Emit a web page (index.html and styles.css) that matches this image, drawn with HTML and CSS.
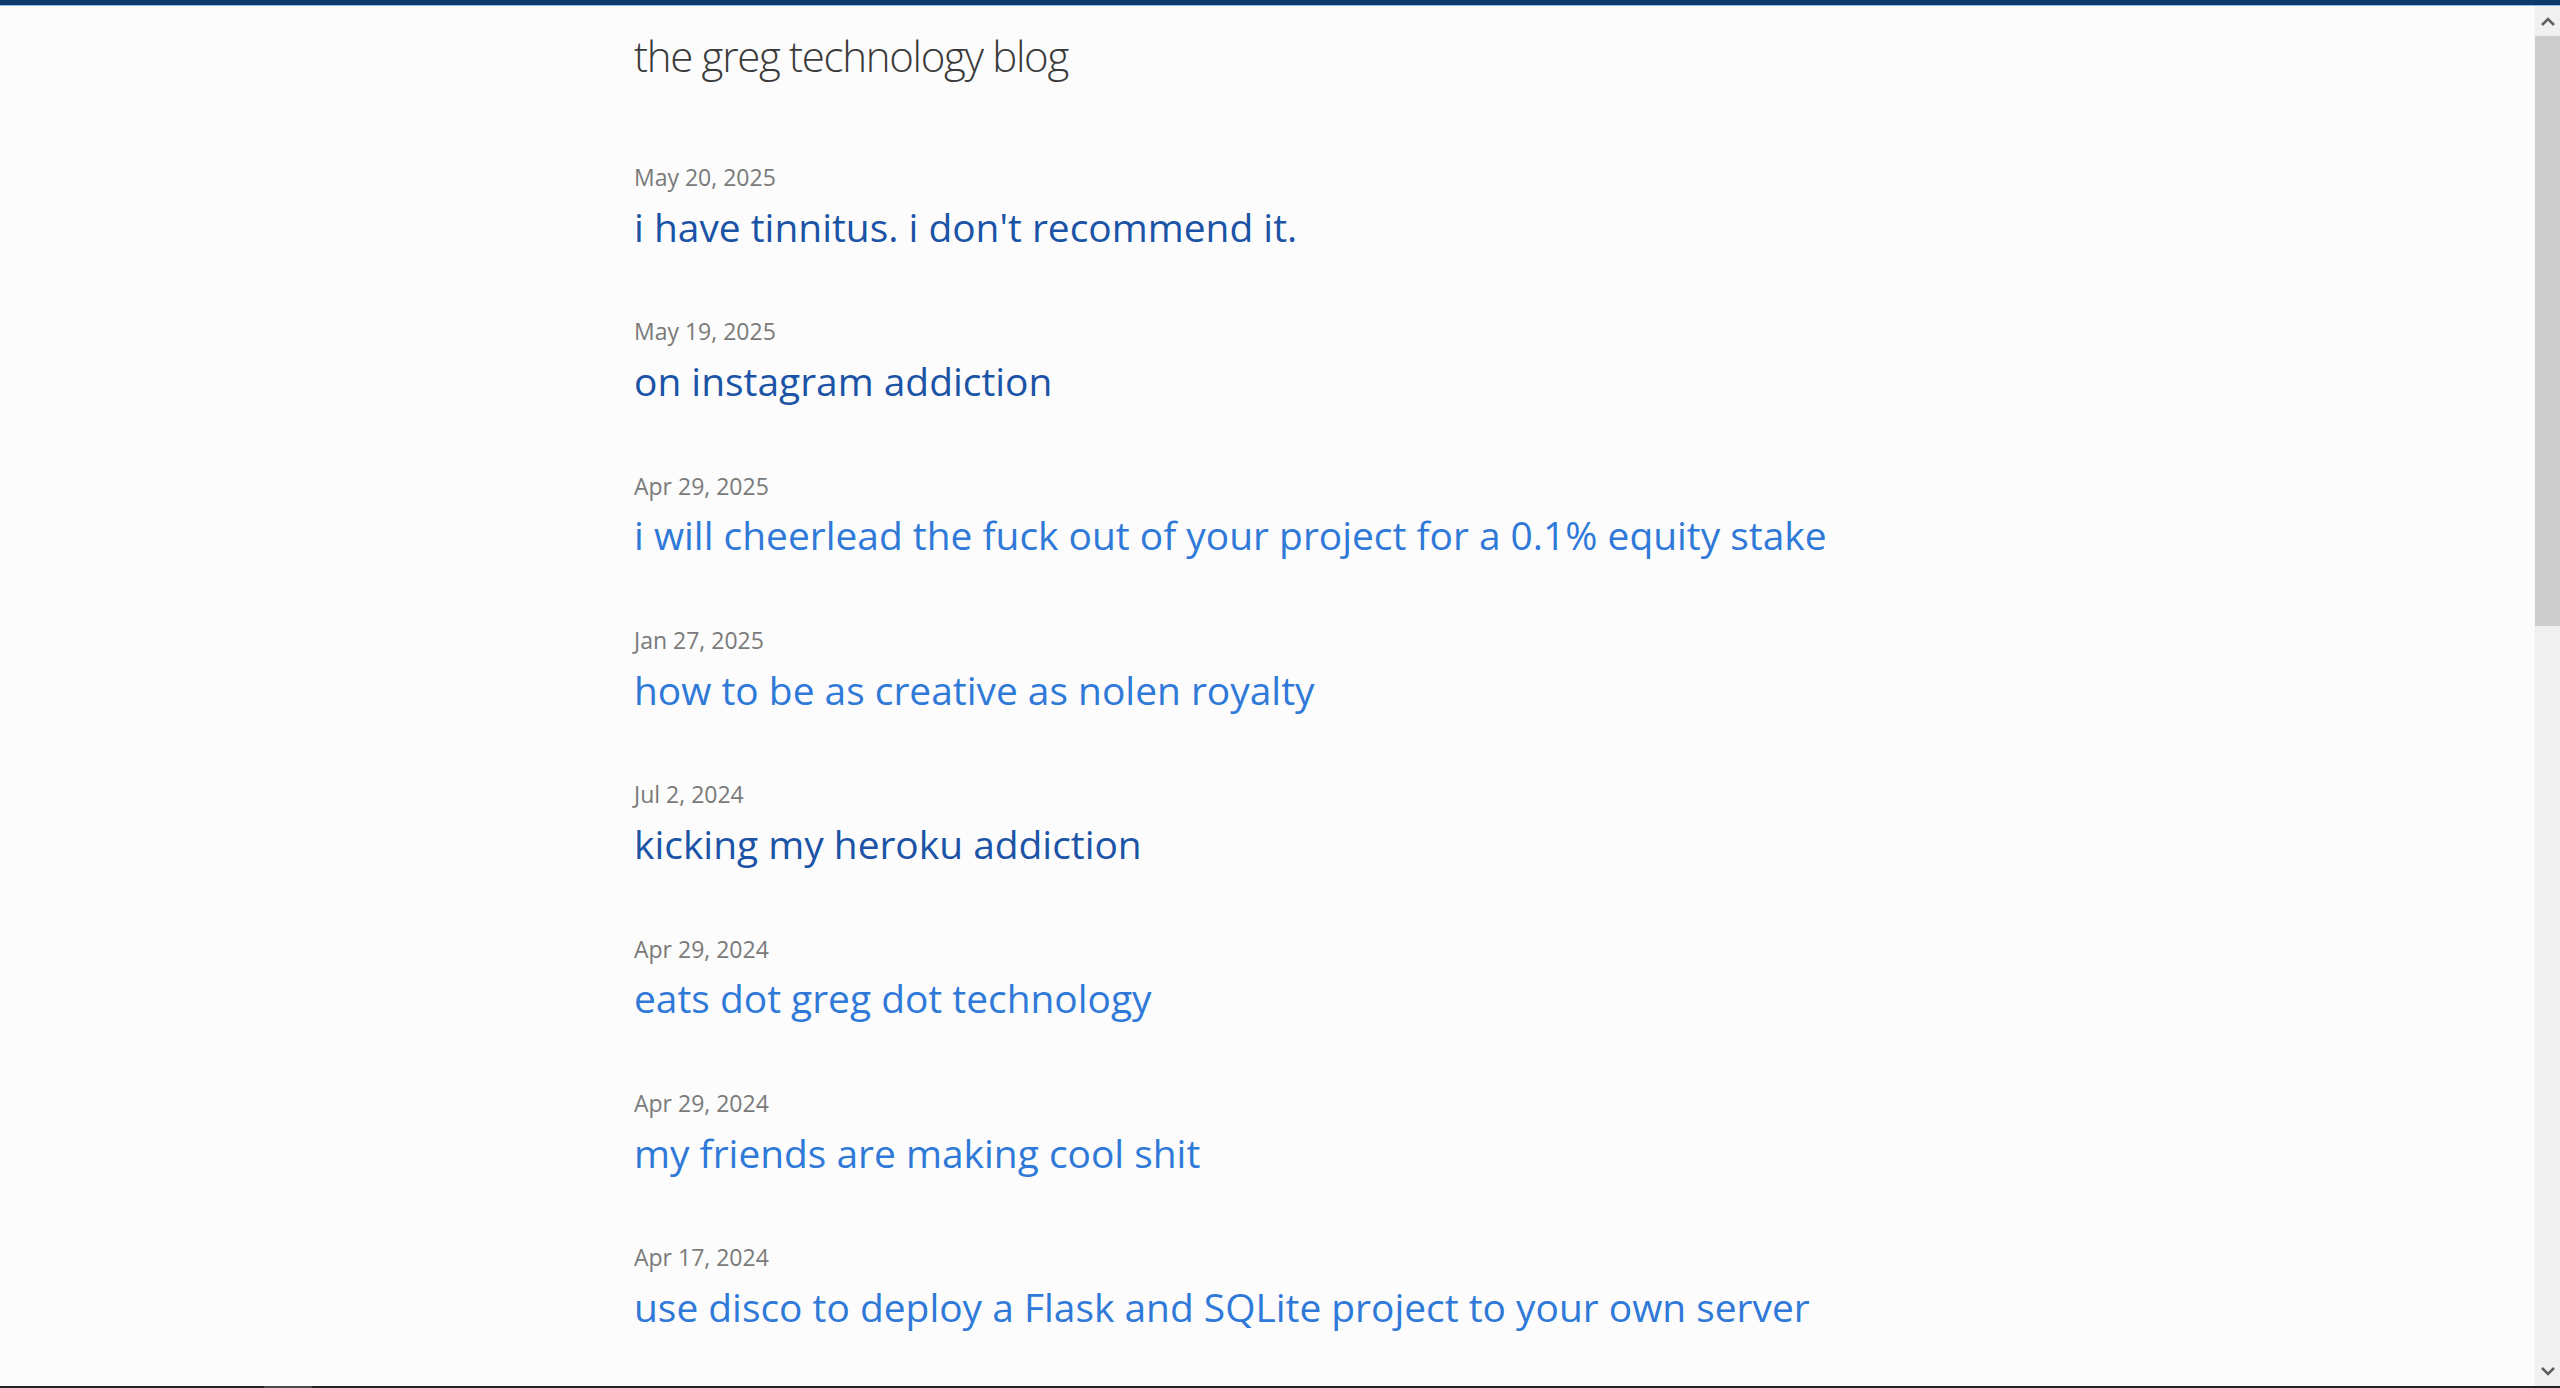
FILE: index.html
```html
<!DOCTYPE html>
<html lang="en">
<head>
<meta charset="utf-8">
<title>the greg technology blog</title>
<link rel="stylesheet" href="styles.css">
</head>
<body>
<div class="topbar"></div>
<div class="window">
  <div class="scroller">
    <main class="page">
      <h1 class="site-title">the greg technology blog</h1>
      <ul class="posts">
        <li class="post"><div class="post-date">May 20, 2025</div><a class="post-link visited" href="#">i have tinnitus. i don't recommend it.</a></li>
        <li class="post"><div class="post-date">May 19, 2025</div><a class="post-link visited" href="#">on instagram addiction</a></li>
        <li class="post"><div class="post-date">Apr 29, 2025</div><a class="post-link" href="#">i will cheerlead the fuck out of your project for a 0.1% equity stake</a></li>
        <li class="post"><div class="post-date">Jan 27, 2025</div><a class="post-link" href="#">how to be as creative as nolen royalty</a></li>
        <li class="post"><div class="post-date">Jul 2, 2024</div><a class="post-link visited" href="#">kicking my heroku addiction</a></li>
        <li class="post"><div class="post-date">Apr 29, 2024</div><a class="post-link" href="#">eats dot greg dot technology</a></li>
        <li class="post"><div class="post-date">Apr 29, 2024</div><a class="post-link" href="#">my friends are making cool shit</a></li>
        <li class="post"><div class="post-date">Apr 17, 2024</div><a class="post-link" href="#">use disco to deploy a Flask and SQLite project to your own server</a></li>
      </ul>
    </main>
  </div>
  <div class="scrollbar" aria-hidden="true">
    <div class="sb-btn">
      <svg width="14" height="9" viewBox="0 0 14 9"><path d="M1 8 L7 2 L13 8" fill="none" stroke="#606060" stroke-width="2.6"/></svg>
    </div>
    <div class="sb-thumb"></div>
    <div class="sb-track"></div>
    <div class="sb-btn">
      <svg width="14" height="9" viewBox="0 0 14 9"><path d="M1 1 L7 7 L13 1" fill="none" stroke="#606060" stroke-width="2.6"/></svg>
    </div>
  </div>
</div>
<div class="taskbar"><span class="taskbar-item"></span></div>
</body>
</html>
```
FILE: styles.css
```css
html, body {
  margin: 0;
  height: 100%;
}
body {
  display: flex;
  flex-direction: column;
  overflow: hidden;
  background: #fcfcfc;
  font-family: "Open Sans", "Noto Sans", sans-serif;
}
.topbar {
  flex: 0 0 auto;
  height: 5px;
  background: #0c3a6b;
  border-bottom: 1px solid #8fbde6;
}
.window {
  flex: 1 1 auto;
  min-height: 0;
  display: flex;
}
.scroller {
  flex: 1 1 auto;
  min-width: 0;
  overflow: hidden;
  background: #fcfcfc;
}
.scrollbar {
  flex: 0 0 26px;
  display: flex;
  flex-direction: column;
  background: #f0f0f0;
  border-left: 1px solid #f6f6f6;
  box-sizing: border-box;
}
.sb-btn {
  flex: 0 0 30px;
  display: flex;
  align-items: center;
  justify-content: center;
}
.sb-thumb {
  flex: 0 0 590px;
  background: #cdcdcd;
}
.sb-track {
  flex: 1 1 auto;
}
.page {
  max-width: 1266px;
  margin: 0 auto;
  padding-top: 25px;
}
.site-title {
  margin: 0;
  font-size: 42px;
  line-height: 50px;
  font-weight: 300;
  letter-spacing: -1.3px;
  color: #3a3a3a;
}
.posts {
  list-style: none;
  margin: 81.1px 0 0;
  padding: 0;
}
.post {
  margin-bottom: 65.5px;
}
.post-date {
  font-size: 23px;
  line-height: 30px;
  color: #7a7a7a;
}
.post-link {
  display: block;
  margin-top: 10.8px;
  font-size: 38.9px;
  line-height: 48px;
  color: #2f79d8;
  text-decoration: none;
}
.post-link.visited {
  color: #1b53a6;
}
.taskbar {
  flex: 0 0 auto;
  height: 2px;
  background: #232323;
  display: flex;
}
.taskbar-item {
  margin-left: 264px;
  width: 48px;
  background: #4a4a4a;
}
```
